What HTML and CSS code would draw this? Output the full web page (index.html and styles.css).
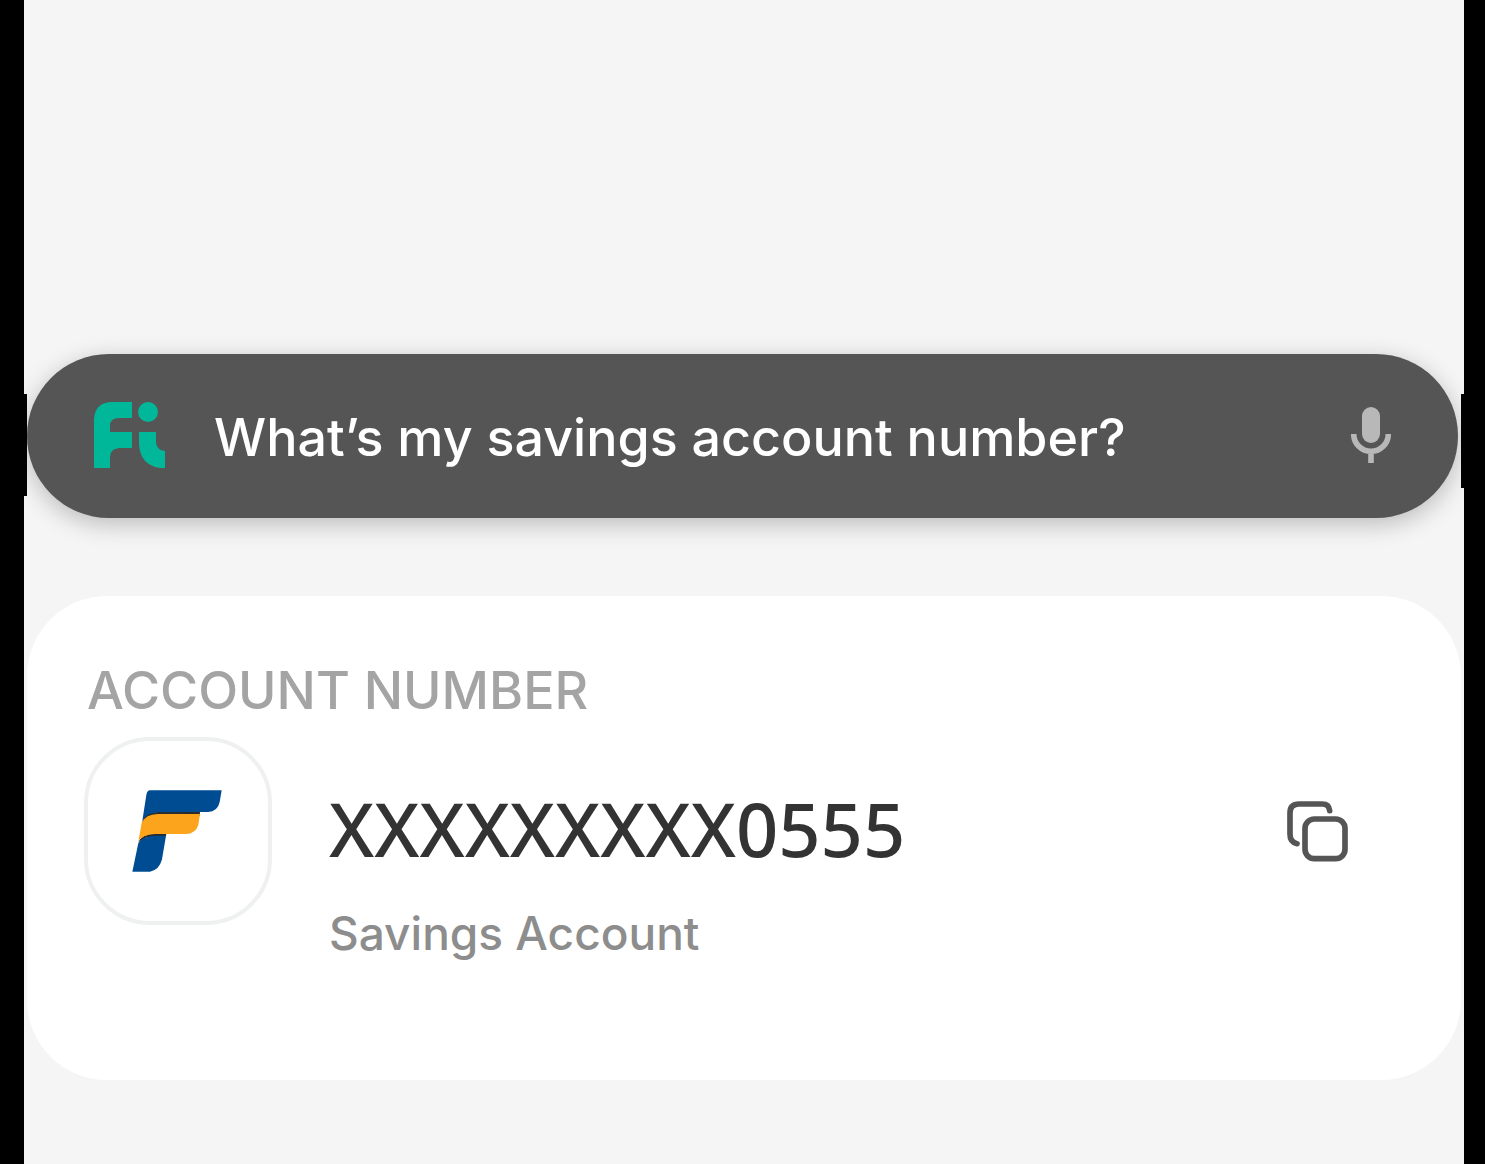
FILE: index.html
```html
<!DOCTYPE html>
<html lang="en">
<head>
<meta charset="utf-8">
<meta name="viewport" content="width=device-width, initial-scale=1">
<title>Ask Fi</title>
<link rel="stylesheet" href="styles.css">
</head>
<body>
<main class="screen">
  <form class="ask" role="search">
    <svg class="ask-logo" viewBox="0 0 72 66" role="img" aria-label="Fi">
      <path d="M0 66V17Q1 1 17 0H38V16H25Q16 16 16 24V30H38V46H25Q16 47 16 55V66Z"/>
      <circle cx="54" cy="10" r="10"/>
      <path d="M45 30H62V41Q63 48 71 49V66H66Q46 63 45 42Z"/>
    </svg>
    <input class="ask-input" type="text" aria-label="Ask Fi" value="What’s my savings account number?">
    <button class="icon-button" type="button" aria-label="Voice search">
      <svg class="mic" viewBox="0 0 40 56" aria-hidden="true">
        <rect x="11" width="18" height="36" rx="9"/>
        <path class="mic-stand" d="M2.7 27a17.3 17.3 0 0 0 34.6 0M20 44V56"/>
      </svg>
    </button>
  </form>

  <section class="card" aria-labelledby="card-title">
    <h1 class="card-title" id="card-title">ACCOUNT NUMBER</h1>
    <div class="account">
      <div class="bank">
        <svg class="bank-logo" viewBox="186 210 270 246" role="img" aria-label="Federal Bank">
          <path fill="#2b2a29" d="M217 304Q225 276 262 276H390L389 288H260L216 312ZM205 367Q215 343 255 340H289L288 348L230 352Z"/>
          <path fill="#004c93" d="M240 211H455L449 246Q443 275 414 276H390L262 277Q228 281 217 302L229 225Q231 211 240 211Z"/>
          <path fill="#fba41c" d="M215 308Q228 283 262 282H390L385 315Q377 340 350 342H255Q215 344 205 365Z"/>
          <path fill="#004c93" d="M205 369Q218 349 252 347H288L276 418Q268 450 240 455H187Z"/>
        </svg>
      </div>
      <div class="details">
        <p class="number">XXXXXXXXX0555</p>
        <p class="type">Savings Account</p>
      </div>
      <button class="icon-button" type="button" aria-label="Copy account number">
        <svg class="copy" viewBox="52 62 183 183" aria-hidden="true">
          <path d="M180 91Q178 71 158 71H88Q61 71 61 98V162Q61 186 82 190"/>
          <rect x="106" y="116" width="120" height="119" rx="28"/>
        </svg>
      </button>
    </div>
  </section>
</main>
</body>
</html>
```
FILE: styles.css
```css
* {
  box-sizing: border-box;
}

body {
  margin: 0;
  background: #000;
  font-family: Inter, "Liberation Sans", sans-serif;
  font-weight: 500;
}

.screen {
  position: relative;
  display: flex;
  flex-direction: column;
  gap: 78px;
  min-height: 100vh;
  margin: 0 21px 0 24px;
  padding: 354px 3px 84px;
  background: #f5f5f5;
}

/* side buttons of the phone frame */
.screen::before,
.screen::after {
  content: "";
  position: absolute;
  top: 394px;
  width: 3px;
  height: 102px;
  background: #000;
}

.screen::before {
  left: 0;
}

.screen::after {
  right: 0;
  height: 94px;
}

.ask {
  display: flex;
  align-items: center;
  height: 164px;
  margin-right: 3px;
  padding: 0 67px 2px;
  border-radius: 82px;
  background: #555;
  box-shadow: 0 6px 24px rgba(0, 0, 0, 0.24);
}

.ask-logo {
  flex: none;
  width: 72px;
  height: 66px;
  fill: #00b899;
}

.ask-input {
  flex: 1;
  min-width: 0;
  margin: 0 48px;
  padding: 6px 0 0;
  border: 0;
  outline: 0;
  background: none;
  color: #fff;
  font: inherit;
  font-size: 52px;
  line-height: 64px;
}

.icon-button {
  flex: none;
  display: flex;
  padding: 0;
  border: 0;
  background: none;
  cursor: pointer;
}

.mic {
  width: 40px;
  height: 56px;
  fill: #b8b8b8;
}

.mic-stand {
  fill: none;
  stroke: #b8b8b8;
  stroke-width: 5.6;
}

.card {
  min-height: 484px;
  padding: 63px 113px 0 57px;
  border-radius: 80px;
  background: #fff;
}

.card-title {
  margin: 0;
  padding-left: 3px;
  color: #a4a4a4;
  font-size: 52px;
  font-weight: 500;
  line-height: 64px;
}

.account {
  display: flex;
  align-items: center;
  margin-top: 14px;
}

.bank {
  flex: none;
  display: grid;
  place-items: center;
  width: 188px;
  height: 188px;
  padding-right: 2px;
  border: 4px solid #eff1f1;
  border-radius: 66px;
}

.bank-logo {
  width: 90px;
  height: 82px;
}

.details {
  flex: 1;
  align-self: flex-start;
  height: 188px;
  margin-left: 57px;
  padding-top: 48px;
}

.number,
.type {
  margin: 0;
}

.number {
  color: #333;
  font-family: "Noto Sans", "Open Sans", sans-serif;
  font-size: 74px;
  line-height: 88px;
}

.type {
  margin-top: 32px;
  color: #8d8d8d;
  font-size: 46px;
  line-height: 56px;
}

.copy {
  width: 61px;
  height: 61px;
  fill: none;
  stroke: #555;
  stroke-width: 17;
  stroke-linecap: round;
}
```
